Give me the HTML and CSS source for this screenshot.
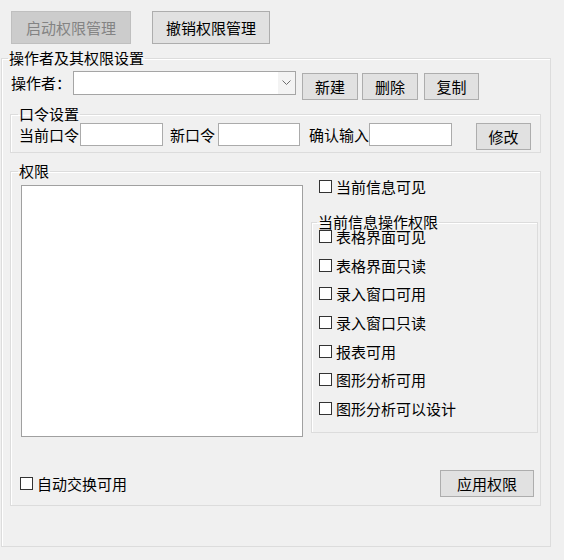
FILE: index.html
```html
<!DOCTYPE html>
<html lang="zh-CN">
<head>
    <meta charset="UTF-8">
    <title>权限管理</title>
    <link rel="stylesheet" href="styles.css">
</head>
<body>
    <div class="toolbar">
        <button class="btn btn-big" disabled>启动权限管理</button>
        <button class="btn btn-big btn-revoke">撤销权限管理</button>
    </div>

    <fieldset class="group group-main">
        <legend>操作者及其权限设置</legend>

        <div class="operator-row">
            <span class="lbl lbl-op">操作者：</span>
            <div class="combo">
                <div class="combo-text"></div>
                <div class="combo-arrow">
                    <svg width="9" height="6" viewBox="0 0 9 6"><polyline points="0.5,0.5 4.5,4.5 8.5,0.5" fill="none" stroke="#6d6d6d" stroke-width="1"/></svg>
                </div>
            </div>
            <button class="btn btn-op btn-new">新建</button>
            <button class="btn btn-op btn-del">删除</button>
            <button class="btn btn-op btn-copy">复制</button>
        </div>

        <fieldset class="group group-inner group-pwd">
            <legend>口令设置</legend>
            <div class="pwd-row">
                <span class="lbl">当前口令</span>
                <input class="txt txt-cur" type="password">
                <span class="lbl lbl-new">新口令</span>
                <input class="txt txt-new" type="password">
                <span class="lbl lbl-confirm">确认输入</span>
                <input class="txt txt-confirm" type="password">
                <button class="btn btn-op btn-modify">修改</button>
            </div>
        </fieldset>

        <fieldset class="group group-inner group-rights">
            <legend>权限</legend>
            <div class="rights-body">
                <div class="listbox"></div>
                <div class="rights-side">
                    <label class="check check-visible"><input type="checkbox"><span>当前信息可见</span></label>
                    <fieldset class="group group-ops">
                        <legend>当前信息操作权限</legend>
                        <div class="check-list">
                            <label class="check"><input type="checkbox"><span>表格界面可见</span></label>
                            <label class="check"><input type="checkbox"><span>表格界面只读</span></label>
                            <label class="check"><input type="checkbox"><span>录入窗口可用</span></label>
                            <label class="check"><input type="checkbox"><span>录入窗口只读</span></label>
                            <label class="check"><input type="checkbox"><span>报表可用</span></label>
                            <label class="check"><input type="checkbox"><span>图形分析可用</span></label>
                            <label class="check"><input type="checkbox"><span>图形分析可以设计</span></label>
                        </div>
                    </fieldset>
                </div>
            </div>
            <div class="rights-foot">
                <label class="check check-auto"><input type="checkbox"><span>自动交换可用</span></label>
                <button class="btn btn-apply">应用权限</button>
            </div>
        </fieldset>
    </fieldset>
</body>
</html>
```

FILE: styles.css
```css
* {
    box-sizing: border-box;
}

body {
    margin: 0;
    background: #f0f0f0;
    font-family: "Noto Sans CJK SC", "Liberation Sans", sans-serif;
    font-size: 15px;
    color: #000;
}

/* buttons */
.btn {
    font-family: inherit;
    font-size: 15px;
    color: #000;
    background: #e1e1e1;
    border: 1px solid #adadad;
    border-radius: 0;
    padding: 0;
    margin: 0;
    line-height: 1;
}

.btn:disabled {
    background: #cccccc;
    border-color: #bfbfbf;
    color: #838383;
}

.toolbar {
    display: flex;
    padding: 11px 0 0 11px;
}

.btn-big {
    width: 120px;
    height: 33px;
}

.btn-revoke {
    margin-left: 21px;
    width: 118px;
}

/* group boxes */
.group {
    margin: 0;
    padding: 0;
    border: 1px solid #dcdcdc;
    box-shadow: inset 1px 1px 0 #fff;
    min-width: 0;
}

.group legend {
    padding: 0 1px;
    margin-left: 6px;
    line-height: 16px;
}

.group-main {
    margin: 6px 0 0 1px;
    width: 550px;
    padding-bottom: 40px;
}

.group-inner {
    margin-left: 8px;
    width: 531px;
}

.group-inner > legend {
    margin-left: 7px;
}

.lbl {
    line-height: 23px;
    white-space: nowrap;
}

/* operator row */
.operator-row {
    display: flex;
    align-items: flex-start;
    margin-top: 5px;
}

.lbl-op {
    margin-left: 9px;
    line-height: 24px;
}

.combo {
    display: flex;
    margin-left: 2px;
    width: 223px;
    height: 24px;
    border: 1px solid #a5a5a5;
    background: #fff;
}

.combo-text {
    flex: 1;
}

.combo-arrow {
    width: 17px;
    display: flex;
    align-items: center;
    justify-content: center;
    background: #f3f3f3;
}

.btn-op {
    margin-top: 2px;
    width: 56px;
    height: 27px;
}

.btn-new {
    margin-left: 6px;
}

.btn-del {
    margin-left: 4px;
}

.btn-copy {
    margin-left: 6px;
    width: 55px;
}

/* password row */
.group-pwd {
    margin-top: 6px;
    padding-bottom: 2px;
}

.pwd-row {
    display: flex;
    align-items: flex-start;
    margin-top: 1px;
    padding-left: 8px;
}

.txt {
    width: 83px;
    height: 23px;
    margin: 0 0 0 1px;
    border: 1px solid #ababab;
    background: #fff;
    outline: none;
}

.lbl-new {
    margin-left: 7px;
}

.txt-new {
    margin-left: 3px;
    width: 82px;
}

.lbl-confirm {
    margin-left: 9px;
}

.txt-confirm {
    margin-left: 0;
}

.btn-modify {
    margin: 0 0 0 24px;
    width: 55px;
}

/* rights */
.group-rights {
    margin-top: 10px;
    padding-bottom: 8px;
}

.rights-body {
    display: flex;
    align-items: flex-start;
}

.listbox {
    margin: 6px 0 0 10px;
    width: 282px;
    height: 252px;
    background: #fff;
    border: 1px solid #a0a0a0;
}

.rights-side {
    margin-left: 8px;
    width: 227px;
}

.check {
    display: flex;
    align-items: center;
    height: 17px;
    line-height: 17px;
    white-space: nowrap;
}

.check input {
    appearance: none;
    -webkit-appearance: none;
    width: 13px;
    height: 13px;
    margin: 0 4px 0 0;
    border: 1px solid #333;
    background: #fff;
}

.check-visible {
    margin: -1px 0 0 8px;
}

.group-ops {
    margin-top: 19px;
    padding-bottom: 15px;
}

.group-ops legend {
    margin-left: 5px;
}

.check-list {
    display: flex;
    flex-direction: column;
    gap: 11.67px;
    margin-top: -2px;
    padding-left: 7px;
}

.rights-foot {
    display: flex;
    align-items: center;
    justify-content: space-between;
    margin-top: 33px;
    padding: 0 6px 0 9px;
}

.check-auto {
    margin-top: 0;
}

.btn-apply {
    width: 94px;
    height: 27px;
}
```
